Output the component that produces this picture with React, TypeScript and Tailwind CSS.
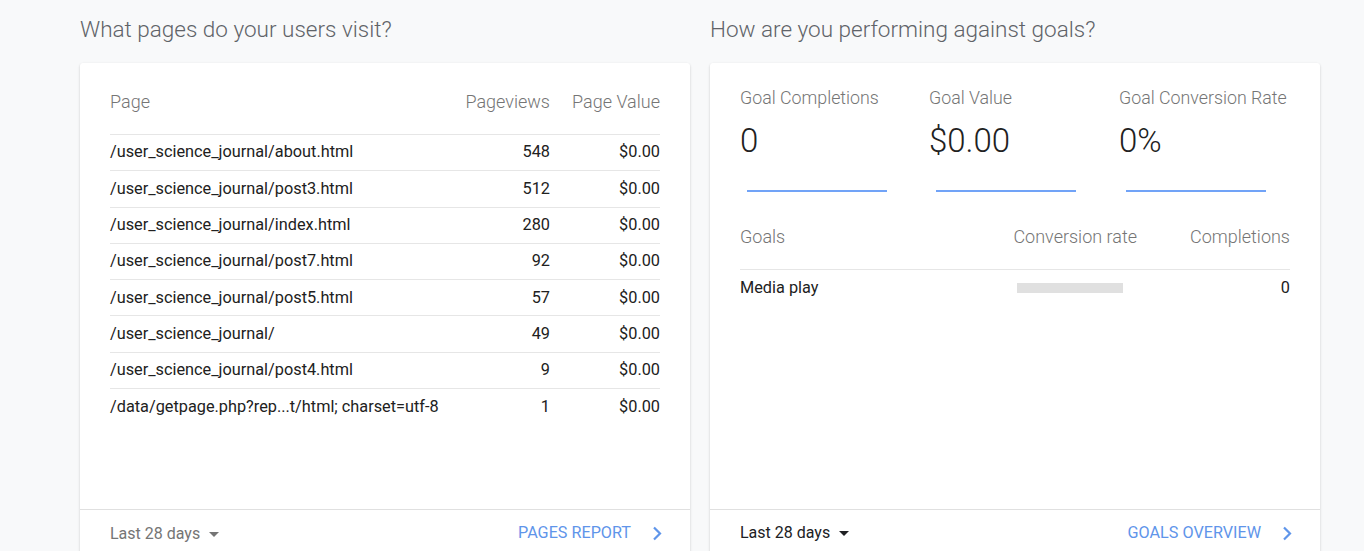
import React from "react";

const pages = [
  { path: "/user_science_journal/about.html", views: 548 },
  { path: "/user_science_journal/post3.html", views: 512 },
  { path: "/user_science_journal/index.html", views: 280 },
  { path: "/user_science_journal/post7.html", views: 92 },
  { path: "/user_science_journal/post5.html", views: 57 },
  { path: "/user_science_journal/", views: 49 },
  { path: "/user_science_journal/post4.html", views: 9 },
  { path: "/data/getpage.php?rep...t/html; charset=utf-8", views: 1 },
];

const goals = [
  { label: "Goal Completions", value: "0", width: "w-[189px]" },
  { label: "Goal Value", value: "$0.00", width: "w-[190px]" },
  { label: "Goal Conversion Rate", value: "0%", width: "w-[171px]" },
];

function Caret({ dark }: { dark?: boolean }) {
  return (
    <svg width="10" height="5" viewBox="0 0 10 5" className="ml-[9px] mt-[2px]">
      <path d="M0 0 L10 0 L5 5 Z" fill={dark ? "#202124" : "#757575"} />
    </svg>
  );
}

function Chevron() {
  return (
    <svg width="10" height="15" viewBox="0 0 10 15">
      <path d="M2 1.5 L8 7.5 L2 13.5" fill="none" stroke="#5f95ea" strokeWidth="2.2" />
    </svg>
  );
}

function Sparkline() {
  return (
    <svg width="140" height="4" viewBox="0 0 140 4" className="block ml-[7px]">
      <line x1="0" y1="2" x2="140" y2="2" stroke="#4285f4" strokeWidth="1.4" />
    </svg>
  );
}

function PagesCard() {
  return (
    <div className="w-[610px] h-[560px] bg-white rounded-[3px] shadow-[0_1px_3px_rgba(0,0,0,0.12),0_1px_2px_rgba(0,0,0,0.08)] flex flex-col">
      <div className="h-[446px] px-[30px] pt-[26px]">
        <div className="flex items-center h-6 mb-[21px] text-[18px] font-light text-[#757575]">
          <div className="flex-1">Page</div>
          <div className="w-[100px] text-right">Pageviews</div>
          <div className="w-[110px] text-right">Page Value</div>
        </div>
        {pages.map((p) => (
          <div
            key={p.path}
            className="flex items-center h-[36.3px] border-t border-[#e6e6e6] text-[16.3px] text-[#212121]"
          >
            <div className="flex-1">{p.path}</div>
            <div className="w-[100px] text-right">{p.views}</div>
            <div className="w-[110px] text-right">$0.00</div>
          </div>
        ))}
      </div>
      <div className="h-[48px] border-t border-[#e0e0e0] pl-[30px] pr-[28px] flex items-center">
        <div className="flex items-center text-[16px] text-[#757575]">
          Last 28 days
          <Caret />
        </div>
        <div className="ml-auto flex items-center gap-[21px] text-[16.2px] text-[#5f95ea] uppercase">
          Pages Report
          <Chevron />
        </div>
      </div>
    </div>
  );
}

function GoalsCard() {
  return (
    <div className="w-[610px] h-[560px] bg-white rounded-[3px] shadow-[0_1px_3px_rgba(0,0,0,0.12),0_1px_2px_rgba(0,0,0,0.08)] flex flex-col">
      <div className="h-[446px] px-[30px] pt-[23px]">
        <div className="flex">
          {goals.map((g) => (
            <div key={g.label} className={`${g.width} shrink-0`}>
              <div className="h-6 leading-6 text-[17.8px] font-light text-[#757575] whitespace-nowrap">
                {g.label}
              </div>
              <div className="mt-[13px] h-[36px] leading-[36px] text-[33px] font-light text-[#212121]">
                {g.value}
              </div>
              <div className="mt-[30px]">
                <Sparkline />
              </div>
            </div>
          ))}
        </div>
        <div className="mt-[31px] flex items-center h-6 text-[18px] font-light text-[#757575]">
          <div className="flex-1">Goals</div>
          <div className="w-[140px] text-right">Conversion rate</div>
          <div className="w-[153px] text-right">Completions</div>
        </div>
        <div className="mt-[21px] flex items-center h-[37px] border-t border-[#e6e6e6] text-[16.3px] text-[#212121]">
          <div className="flex-1">Media play</div>
          <div className="w-[140px]">
            <div className="ml-[20px] w-[106px] h-[10px] bg-[#e0e0e0]" />
          </div>
          <div className="w-[153px] text-right">0</div>
        </div>
      </div>
      <div className="h-[48px] border-t border-[#e0e0e0] pl-[30px] pr-[28px] flex items-center">
        <div className="w-[131px] self-stretch flex flex-col">
          <div className="flex-1 flex items-center text-[16px] text-[#202124] pt-[2px]">
            Last 28 days
            <Caret dark />
          </div>
          <div className="h-[3px] bg-[#1a73e8] mb-[1px]" />
        </div>
        <div className="ml-auto flex items-center gap-[21px] text-[16.2px] text-[#5f95ea] uppercase">
          Goals Overview
          <Chevron />
        </div>
      </div>
    </div>
  );
}

export default function App() {
  return (
    <div
      className="min-h-screen bg-[#f8f9fa] pl-[80px] pt-[15px] overflow-hidden"
      style={{ fontFamily: "Roboto, 'Liberation Sans', sans-serif" }}
    >
      <div className="flex gap-5">
        <div>
          <h2 className="h-[28px] leading-[28px] text-[22.5px] font-light text-[#5f6368] mb-[20px]">
            What pages do your users visit?
          </h2>
          <PagesCard />
        </div>
        <div>
          <h2 className="h-[28px] leading-[28px] text-[22.5px] font-light text-[#5f6368] mb-[20px]">
            How are you performing against goals?
          </h2>
          <GoalsCard />
        </div>
      </div>
    </div>
  );
}
